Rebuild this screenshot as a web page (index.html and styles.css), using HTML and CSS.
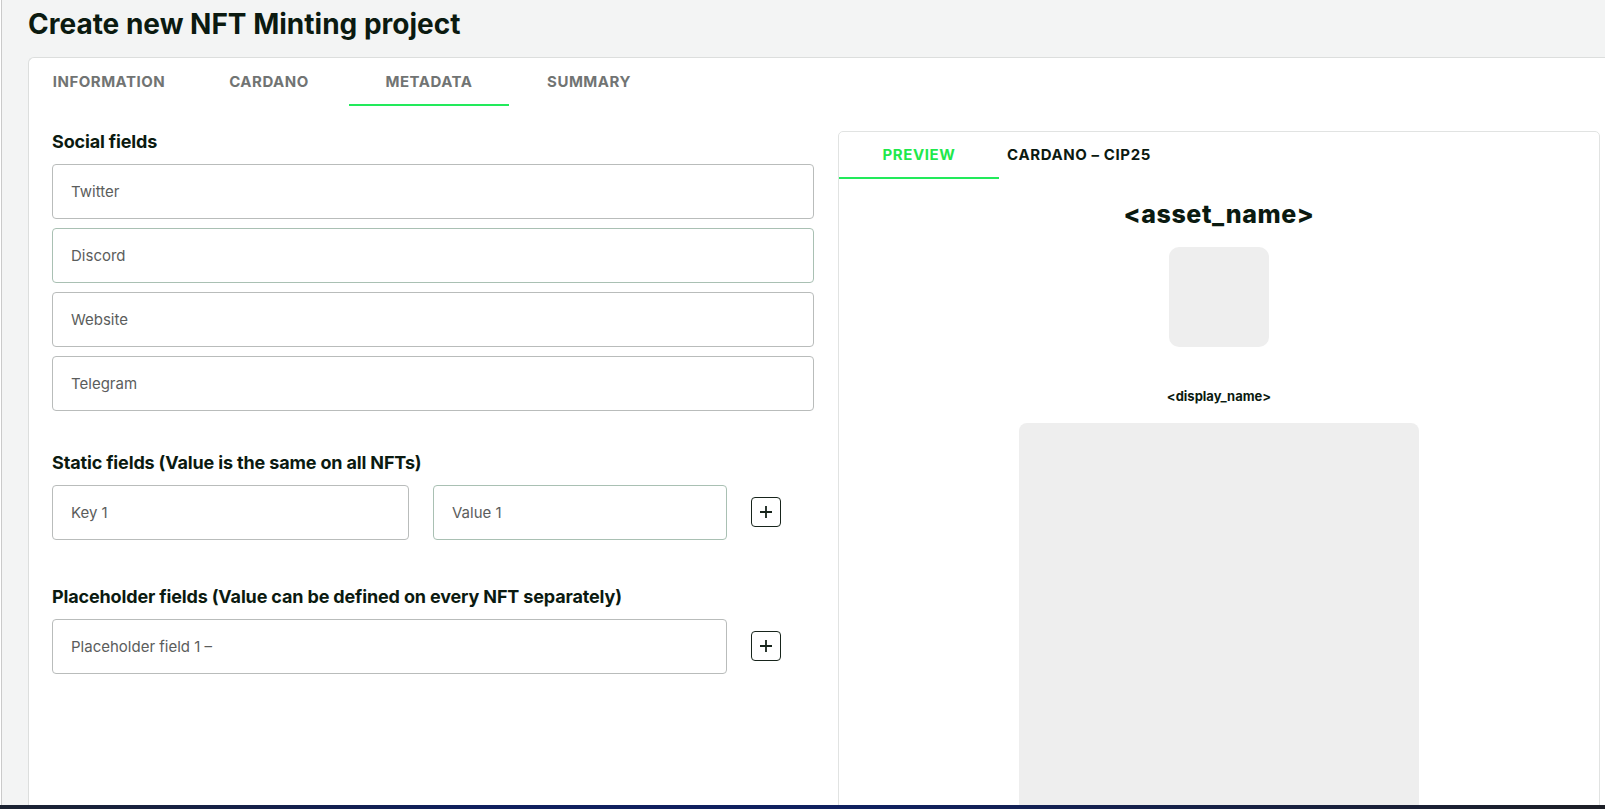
FILE: index.html
```html
<!DOCTYPE html>
<html lang="en">
<head>
    <meta charset="UTF-8">
    <title>Create new NFT Minting project</title>
    <meta name="viewport" content="width=device-width,initial-scale=1.0">
    <link rel="stylesheet" href="styles.css">
</head>
<body>
<div class="page">
    <h1 class="page-title">Create new NFT Minting project</h1>

    <div class="card">
        <div class="steps">
            <div class="step">INFORMATION</div>
            <div class="step">CARDANO</div>
            <div class="step step--active">METADATA</div>
            <div class="step">SUMMARY</div>
        </div>

        <div class="card-body">
            <div class="form">
                <h2 class="form-title">Social fields</h2>
                <div class="field-list">
                    <input class="field" type="text" placeholder="Twitter">
                    <input class="field field--green" type="text" placeholder="Discord">
                    <input class="field" type="text" placeholder="Website">
                    <input class="field" type="text" placeholder="Telegram">
                </div>

                <h2 class="form-title form-title--static">Static fields (Value is the same on all NFTs)</h2>
                <div class="field-row">
                    <input class="field" type="text" placeholder="Key 1">
                    <input class="field field--green" type="text" placeholder="Value 1">
                    <button class="add-button" type="button">
                        <svg width="14" height="14" viewBox="0 0 14 14">
                            <path d="M7 1v12M1 7h12" stroke="#17241b" stroke-width="1.8" fill="none"/>
                        </svg>
                    </button>
                </div>

                <h2 class="form-title form-title--placeholder">Placeholder fields (Value can be defined on every NFT separately)</h2>
                <div class="field-row">
                    <input class="field field--wide" type="text" placeholder="Placeholder field 1 –">
                    <button class="add-button" type="button">
                        <svg width="14" height="14" viewBox="0 0 14 14">
                            <path d="M7 1v12M1 7h12" stroke="#17241b" stroke-width="1.8" fill="none"/>
                        </svg>
                    </button>
                </div>
            </div>

            <div class="preview">
                <div class="preview-tabs">
                    <div class="preview-tab preview-tab--active">PREVIEW</div>
                    <div class="preview-tab">CARDANO – CIP25</div>
                </div>
                <div class="preview-body">
                    <div class="asset-name">&lt;asset_name&gt;</div>
                    <div class="asset-thumb"></div>
                    <div class="display-name">&lt;display_name&gt;</div>
                    <div class="asset-image"></div>
                </div>
            </div>
        </div>
    </div>
</div>
<div class="taskbar"></div>
</body>
</html>
```

FILE: styles.css
```css
html, body {
    height: 100%;
}

body {
    margin: 0;
    background-color: #f3f4f4;
    font-family: Inter, "Noto Sans", sans-serif;
    color: #0b1a10;
    border-left: 1px solid #ffffff;
    overflow: hidden;
}

.page {
    height: 100%;
    border-left: 1px solid #cacaca;
    display: flex;
    flex-direction: column;
    overflow: hidden;
}

.page-title {
    flex-shrink: 0;
    margin: 0;
    padding: 7px 0 0 26px;
    height: 57px;
    box-sizing: border-box;
    font-size: 28px;
    line-height: 34px;
    font-weight: 700;
}

/*主卡片*/
.card {
    flex: 1;
    min-height: 0;
    overflow: hidden;
    margin-left: 26px;
    background-color: #ffffff;
    border-top: 1px solid #dcdedd;
    border-left: 1px solid #dcdedd;
    border-top-left-radius: 6px;
}

.steps {
    display: flex;
}

.step {
    width: 160px;
    height: 46px;
    border-bottom: 2px solid transparent;
    display: flex;
    align-items: center;
    justify-content: center;
    font-size: 15px;
    font-weight: 700;
    letter-spacing: 0.5px;
    color: #717473;
}

.step--active {
    border-bottom-color: #22ea5b;
}

.card-body {
    display: flex;
    gap: 24px;
    padding: 25px 5px 0 23px;
}

/*左侧表单*/
.form {
    width: 762px;
    flex-shrink: 0;
}

.form-title {
    margin: 0 0 11px;
    font-size: 18px;
    line-height: 22px;
    font-weight: 700;
    letter-spacing: -0.15px;
}

.form-title--static {
    margin-top: 41px;
}

.form-title--placeholder {
    margin-top: 46px;
}

.field-list {
    display: flex;
    flex-direction: column;
    gap: 9px;
}

.field-row {
    display: grid;
    grid-template-columns: 357px 294px 30px;
    column-gap: 24px;
    align-items: center;
}

.field {
    height: 55px;
    box-sizing: border-box;
    padding: 0 18px;
    border: 1px solid #b9bcbb;
    border-radius: 4px;
    font-family: Inter, "Noto Sans", sans-serif;
    font-size: 15px;
    color: #333333;
    background-color: #ffffff;
    outline: none;
}

.field--green {
    border-color: #a9c0b3;
}

.field--wide {
    grid-column: span 2;
}

.field::placeholder {
    color: #5b5d5c;
}

.add-button {
    width: 30px;
    height: 30px;
    padding: 0;
    border: 1.5px solid #17241b;
    border-radius: 4px;
    background-color: #ffffff;
    display: flex;
    align-items: center;
    justify-content: center;
    margin-top: -2px;
}

/*右侧预览*/
.preview {
    flex: 1;
    border: 1px solid #e1e3e2;
    border-radius: 5px;
    height: 720px;
}

.preview-tabs {
    display: flex;
}

.preview-tab {
    width: 160px;
    height: 45px;
    border-bottom: 2px solid transparent;
    display: flex;
    align-items: center;
    justify-content: center;
    font-size: 15px;
    font-weight: 700;
    letter-spacing: 0.6px;
    color: #0b1a10;
}

.preview-tab--active {
    color: #1fe84c;
    border-bottom-color: #22ea5b;
}

.preview-body {
    display: flex;
    flex-direction: column;
    align-items: center;
    padding-top: 20px;
}

.asset-name {
    font-size: 25px;
    line-height: 30px;
    font-weight: 800;
    letter-spacing: 0.6px;
}

.asset-thumb {
    width: 100px;
    height: 100px;
    margin-top: 18px;
    border-radius: 10px;
    background-color: #eeeeee;
}

.display-name {
    margin-top: 40px;
    font-size: 13px;
    line-height: 18px;
    font-weight: 700;
}

.asset-image {
    width: 400px;
    height: 500px;
    margin-top: 18px;
    border-radius: 8px;
    background-color: #eeeeee;
}

/*底部任务栏*/
.taskbar {
    position: fixed;
    left: 0;
    right: 0;
    bottom: 0;
    height: 4px;
    background: linear-gradient(90deg, #1b2231 0%, #0f1f5e 30%, #10215f 55%, #1d1f26 100%);
}
```
